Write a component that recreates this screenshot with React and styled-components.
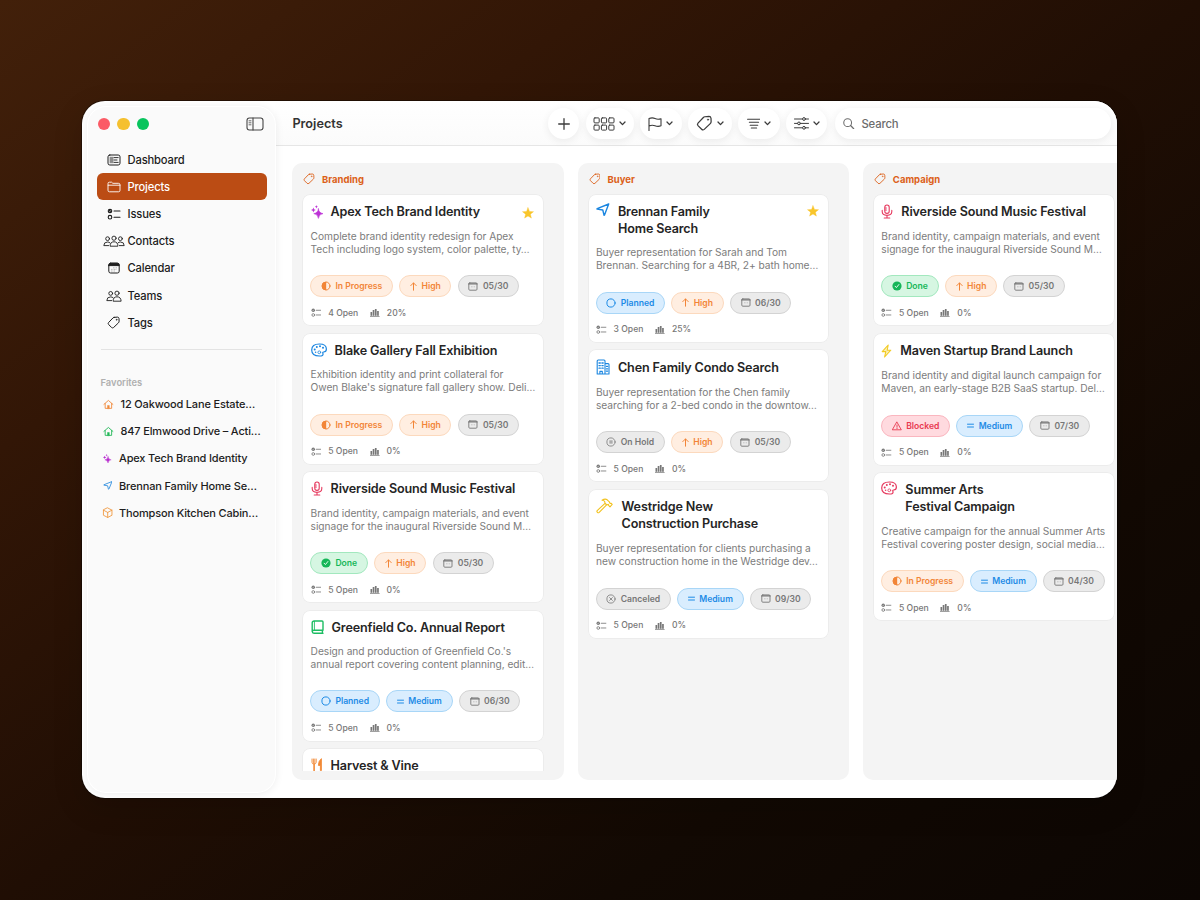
import React from "react";
import styled, { createGlobalStyle, css } from "styled-components";

const ICONS = {
  dashboard: {
    w: 14, h: 12, sw: 1,
    body: (
      <>
        <rect x="1" y="1" width="12" height="10" rx="1.8" />
        <rect x="2.6" y="2.8" width="3.8" height="6.4" fill="currentColor" stroke="none" opacity=".5" />
        <path d="M7 3.6h4.2M7 6h3M7 8.4h4.2" strokeWidth=".9" />
      </>
    ),
  },
  folder: {
    w: 14, h: 12, sw: 0.9,
    body: <path d="M1 4.2V2.6Q1 1.2 2.4 1.2H4.6L5.8 2.3H11.4Q13 2.3 13 3.8V9.3Q13 10.8 11.5 10.8H2.5Q1 10.8 1 9.3V4.2H13" />,
  },
  checklist: {
    w: 14, h: 12, sw: 1.1,
    body: (
      <>
        <circle cx="3" cy="3" r="2.3" fill="currentColor" stroke="none" />
        <circle cx="3" cy="9.2" r="1.8" />
        <path d="M7 3h6M7 9.2h6" />
        <path d="M2.2 3l.6.7 1-1.3" stroke="#fff" strokeWidth=".5" />
      </>
    ),
  },
  people3: {
    w: 22, h: 12, sw: 0.9,
    body: (
      <>
        <circle cx="11" cy="3.2" r="2.1" />
        <circle cx="4.6" cy="3.7" r="1.9" />
        <circle cx="17.4" cy="3.7" r="1.9" />
        <path d="M7.1 10.8Q7.1 6.8 11 6.8T14.9 10.8Z" />
        <path d="M5.6 10.6H.8Q.8 7 4.6 7Q6 7 6.9 7.8M16.4 10.6H21.2Q21.2 7 17.4 7Q16 7 15.1 7.8" />
      </>
    ),
  },
  calendar: {
    w: 12, h: 12, sw: 1,
    body: (
      <>
        <rect x=".8" y="1.2" width="10.4" height="9.8" rx="1.8" />
        <path d="M.8 3.2Q.8 1.2 2.8 1.2H9.2Q11.2 1.2 11.2 3.2V3.6H.8Z" fill="currentColor" />
        <path d="M5 5.8h4M3 7.4h6M3 9h4" strokeWidth=".8" strokeDasharray=".9 .6" strokeLinecap="butt" opacity=".4" />
      </>
    ),
  },
  people2: {
    w: 16, h: 12, sw: 0.9,
    body: (
      <>
        <circle cx="4.7" cy="3.4" r="1.9" />
        <circle cx="11" cy="3.2" r="2.1" />
        <path d="M7.1 10.8Q7.1 6.8 11 6.8T15.1 10.8Z" />
        <path d="M5.6 10.6H.8Q.8 6.9 4.7 6.9Q6 6.9 7 7.6" />
      </>
    ),
  },
  tag: {
    w: 13, h: 13, sw: 1,
    body: (
      <>
        <path d="M7 1.4L10.4 1.1Q11.8 1.1 12 2.6L12.1 5.2Q12.1 6.2 11.4 6.9L6.6 11.5Q5.5 12.4 4.5 11.4L1.6 8.5Q.7 7.5 1.6 6.5L5.9 2Q6.4 1.5 7 1.4Z" />
        <circle cx="9.6" cy="3.7" r=".55" fill="currentColor" strokeWidth=".4" />
      </>
    ),
  },
  panel: {
    w: 18, h: 14, sw: 1.1,
    body: (
      <>
        <rect x="1" y="1" width="16" height="12" rx="2.4" />
        <path d="M7 1v12" />
        <path d="M3 3.8h2M3 5.8h2M3 7.8h2" strokeWidth=".8" />
      </>
    ),
  },
  house: {
    w: 12, h: 12, sw: 1,
    body: (
      <>
        <path d="M1 6L6 1.6L11 6M2.4 5V10.4H9.6V5" />
        <path d="M5 10.4V7.2H7V10.4Z" fill="currentColor" strokeWidth=".5" />
      </>
    ),
  },
  sparkles: {
    w: 12, h: 14, sw: 0,
    body: (
      <g fill="currentColor">
        <path d="M7.4 3.8Q7.8 8.1 12 8.6Q7.8 9.1 7.4 13.4Q7 9.1 2.8 8.6Q7 8.1 7.4 3.8Z" stroke="currentColor" strokeWidth=".6" />
        <path d="M2.4 2.6Q2.6 4.7 4.8 5Q2.6 5.3 2.4 7.4Q2.2 5.3 0 5Q2.2 4.7 2.4 2.6Z" />
        <path d="M5.4 0Q5.5 1.6 7 1.8Q5.5 2 5.4 3.6Q5.3 2 3.8 1.8Q5.3 1.6 5.4 0Z" />
      </g>
    ),
  },
  plane: {
    w: 14, h: 13, sw: 1.4,
    body: <path d="M12.7 1L1.2 5.6Q.8 5.9 1.2 6.1L6.8 7L8 12.1Q8.2 12.5 8.5 12.1Z" />,
  },
  box: {
    w: 12, h: 12, sw: 0.9,
    body: <path d="M6 1L10.5 3.3V8.7L6 11L1.5 8.7V3.3ZM1.5 3.3L6 5.7L10.5 3.3M6 5.7V11" />,
  },
  palette: {
    w: 16, h: 14, sw: 1.2,
    body: (
      <>
        <path d="M8.4 1Q15.4 1 15.4 6Q15.4 9 12.6 9Q11.2 9.2 12 10.6Q12.6 13 8.4 13Q.7 13 .7 7T8.4 1Z" />
        <g fill="currentColor" stroke="none">
          <circle cx="3.7" cy="6.4" r="1" />
          <circle cx="5.8" cy="3.9" r="1" />
          <circle cx="9" cy="3.3" r="1" />
          <circle cx="12" cy="4.7" r="1" />
          <circle cx="4.6" cy="9.2" r=".8" />
        </g>
        <circle cx="8.3" cy="9.3" r="1.4" strokeWidth=".8" />
      </>
    ),
  },
  mic: {
    w: 12, h: 15, sw: 1.1,
    body: (
      <>
        <rect x="3.8" y="1" width="4.4" height="8.4" rx="2.2" />
        <path d="M1.2 6.4V7.6Q1.2 11.4 6 11.4T10.8 7.6V6.4M6 11.4V14M3.2 14H8.8M4 4h1.4M4 6h1.4" />
      </>
    ),
  },
  book: {
    w: 13, h: 14, sw: 1.4,
    body: (
      <>
        <path d="M3.2 1H11Q12 1 12 2V10.2H3Q1.2 10.2 1.2 11.6Q1.2 13.2 3 13.2H12M1.2 11.6V2.8Q1.2 1 3.2 1M11.4 10.2V13" />
        <path d="M3.4 1.4V10" strokeWidth=".9" />
      </>
    ),
  },
  fork: {
    w: 12, h: 14, sw: 0.9,
    body: (
      <>
        <path d="M1 1V4.4Q1 6 3 6T5.2 4.4V1M2.4 1V5M3.8 1V5" />
        <path d="M3.1 6V12.6" strokeWidth="1.6" />
        <path d="M10 1Q7.4 3 7.4 7.4H9.4V12.6H10.4V1Z" fill="currentColor" />
      </>
    ),
  },
  building: {
    w: 14, h: 16, sw: 1.1,
    body: (
      <>
        <path d="M1.2 15V2Q1.2 1 2.2 1H8Q9 1 9 2V15M9 4.6H12Q13 4.6 13 5.6V15H1.2M3.9 15V12.4H6.3V15" />
        <path d="M3 4h1.3M5.9 4h1.3M3 6.6h1.3M5.9 6.6h1.3M3 9.2h1.3M5.9 9.2h1.3M10.4 7.4h1.2M10.4 9.8h1.2M10.4 12.2h1.2" strokeWidth="1.3" />
      </>
    ),
  },
  hammer: {
    w: 17.6, h: 16, sw: 1.1,
    body: (
      <path d="M9 5.3L1.2 12.6Q.5 13.4 1.4 14.3T3.2 14.4L10.6 6.8M6 2.2Q9.2.2 11.2 1.8L13.6 4.2Q13.4 5.2 14.2 5.4L15 5.2L16.2 6.4L14 8.8L12.6 7.4Q12.8 6.6 12 6.4L10.8 7L8.8 5Q9.4 2.6 6 2.2Z" />
    ),
  },
  bolt: {
    w: 11, h: 14, sw: 1.1,
    body: <path d="M7.2 1L1.2 7.6H4.8L3.6 13L9.8 6.2H6.2Z" fill="#fbf0b8" />,
  },
  star: {
    w: 12, h: 12, sw: 0.4,
    body: <path fill="currentColor" d="M6 .7L7.5 4.4L11.5 4.7L8.4 7.2L9.4 11.1L6 9L2.6 11.1L3.6 7.2L.5 4.7L4.5 4.4Z" />,
  },
  plus: { w: 12, h: 12, sw: 1.3, body: <path d="M6 .7V11.3M.7 6H11.3" /> },
  grid: {
    w: 22, h: 14, sw: 1,
    body: (
      <>
        {[1, 8.4, 15.8].map((x) => (
          <React.Fragment key={x}>
            <rect x={x} y=".9" width="5.2" height="5" rx=".9" />
            <rect x={x} y="8.1" width="5.2" height="5" rx=".9" />
          </React.Fragment>
        ))}
      </>
    ),
  },
  flag: {
    w: 14, h: 14, sw: 1.1,
    body: <path d="M1 13.4V1.6Q4.2.2 7 1.5T13 1.7V8.8Q10 9.9 7 8.7T1 9.1" />,
  },
  sort: { w: 15, h: 12, sw: 1.1, body: <path d="M.6 1.4H14.4M2.5 4.6H12.5M3.4 7.8H11.6M4.6 10.8H10.4" /> },
  sliders: {
    w: 15, h: 13, sw: 1,
    body: (
      <>
        <path d="M.5 2H8.4M11.6 2H14.5M.5 6.4H3.4M6.6 6.4H14.5M.5 10.8H8.4M11.6 10.8H14.5" />
        <circle cx="10" cy="2" r="1.4" />
        <circle cx="5" cy="6.4" r="1.4" />
        <circle cx="10" cy="10.8" r="1.4" />
      </>
    ),
  },
  chevron: { w: 7, h: 5, sw: 1.3, body: <path d="M1 1L3.5 3.6L6 1" /> },
  search: {
    w: 12, h: 12, sw: 1.1,
    body: (
      <>
        <circle cx="4.9" cy="4.9" r="4.1" />
        <path d="M8 8L11.2 11.2" strokeWidth="1.4" />
      </>
    ),
  },
  half: {
    w: 10, h: 10, sw: 1,
    body: (
      <>
        <circle cx="5" cy="5" r="4" />
        <path d="M5 1A4 4 0 0 0 5 9Z" fill="currentColor" strokeWidth=".2" />
      </>
    ),
  },
  circle: { w: 10, h: 10, sw: 1, body: <circle cx="5" cy="5" r="4.1" /> },
  check: {
    w: 10, h: 10, sw: 0,
    body: (
      <>
        <circle cx="5" cy="5" r="4.6" fill="currentColor" />
        <path d="M3.1 5.2L4.4 6.6L6.9 3.5" stroke="#e6faee" strokeWidth="1" />
      </>
    ),
  },
  pause: {
    w: 10, h: 10, sw: 0.8,
    body: (
      <>
        <circle cx="5" cy="5" r="4.1" />
        <path d="M4.1 3.7V6.3M5.9 3.7V6.3" strokeWidth=".9" />
      </>
    ),
  },
  cross: {
    w: 10, h: 10, sw: 0.8,
    body: (
      <>
        <circle cx="5" cy="5" r="4.1" />
        <path d="M3.6 3.6L6.4 6.4M6.4 3.6L3.6 6.4" />
      </>
    ),
  },
  warning: { w: 10, h: 10, sw: 0.9, body: <path d="M5 1.2L9.3 8.8H.7ZM5 4V6.2M5 7.3V7.6" /> },
  arrow: { w: 7, h: 9, sw: 1, body: <path d="M3.5 8.2V1M.8 3.6L3.5.9L6.2 3.6" /> },
  equals: { w: 7, h: 9, sw: 1, body: <path d="M.5 3.2H6.5M.5 6H6.5" /> },
  date: {
    w: 10, h: 9, sw: 0.9,
    body: (
      <>
        <rect x=".8" y=".9" width="8.2" height="7.3" rx="1" />
        <path d="M.8 1.9H9" strokeWidth="1.3" />
        <path d="M3 4.8H6.8" strokeWidth=".7" strokeDasharray=".8 .7" strokeLinecap="butt" opacity=".6" />
      </>
    ),
  },
  bars: {
    w: 10, h: 9, sw: 0,
    body: (
      <g fill="currentColor">
        <rect x=".5" y="4" width="1.7" height="3.8" />
        <rect x="2.7" y="2" width="1.7" height="5.8" />
        <rect x="4.9" y="1" width="1.7" height="6.8" />
        <rect x="7.1" y="3" width="1.7" height="4.8" />
        <rect x="0" y="8" width="9.6" height=".7" />
      </g>
    ),
  },
};

function Icon({ name, scale = 1 }) {
  const { w, h, sw, body } = ICONS[name];
  return (
    <Svg
      width={w * scale}
      height={h * scale}
      viewBox={`0 0 ${w} ${h}`}
      fill="none"
      stroke="currentColor"
      strokeWidth={sw}
      strokeLinecap="round"
      strokeLinejoin="round"
    >
      {body}
    </Svg>
  );
}

const NAV = [
  ["dashboard", "Dashboard"],
  ["folder", "Projects"],
  ["checklist", "Issues"],
  ["people3", "Contacts"],
  ["calendar", "Calendar"],
  ["people2", "Teams"],
  ["tag", "Tags"],
];

const FAVORITES = [
  ["house", "#f08a3c", "12 Oakwood Lane Estate…", 13.5],
  ["house", "#22b858", "847 Elmwood Drive – Acti…", 13.5],
  ["sparkles", "#b92fd0", "Apex Tech Brand Identity", 12],
  ["plane", "#3d96e0", "Brennan Family Home Se…", 12],
  ["box", "#f0953a", "Thompson Kitchen Cabin…", 12],
];

const TOOLS = [
  ["plus", 31],
  ["grid", 48],
  ["flag", 42],
  ["tag", 43.6, 1.25],
  ["sort", 41.6, 0.93],
  ["sliders", 41],
];

const STATUS = {
  "In Progress": ["half", "orange"],
  Planned: ["circle", "blue"],
  Done: ["check", "green"],
  "On Hold": ["pause", "gray"],
  Canceled: ["cross", "gray"],
  Blocked: ["warning", "red"],
};

const PRIORITY = {
  High: ["arrow", "orange"],
  Medium: ["equals", "blue"],
};

const TONES = {
  orange: ["#f28537", "#ffeee1", "#fcd9bd"],
  blue: ["#1d8be6", "#d9edfe", "#a8d6f7"],
  green: ["#15b658", "#d6f6e2", "#a2e8be"],
  gray: ["#777777", "#ebebeb", "#d3d3d3"],
  red: ["#e8394f", "#ffdadf", "#fab6bf"],
};

const riverside = {
  icon: "mic", color: "#e63a5f", title: ["Riverside Sound Music Festival"],
  text: ["Brand identity, campaign materials, and event", "signage for the inaugural Riverside Sound M…"],
  status: "Done", priority: "High", date: "05/30", open: 5, done: 0,
};

const COLUMNS = [
  {
    name: "Branding",
    cards: [
      {
        icon: "sparkles", color: "#bd33d6", title: ["Apex Tech Brand Identity"], starred: true,
        text: ["Complete brand identity redesign for Apex", "Tech including logo system, color palette, ty…"],
        status: "In Progress", priority: "High", date: "05/30", open: 4, done: 20,
      },
      {
        icon: "palette", color: "#1b86e0", title: ["Blake Gallery Fall Exhibition"],
        text: ["Exhibition identity and print collateral for", "Owen Blake's signature fall gallery show. Deli…"],
        status: "In Progress", priority: "High", date: "05/30", open: 5, done: 0,
      },
      riverside,
      {
        icon: "book", color: "#1dbd63", title: ["Greenfield Co. Annual Report"],
        text: ["Design and production of Greenfield Co.'s", "annual report covering content planning, edit…"],
        status: "Planned", priority: "Medium", date: "06/30", open: 5, done: 0,
      },
      { icon: "fork", color: "#f28a37", title: ["Harvest & Vine"] },
    ],
  },
  {
    name: "Buyer",
    cards: [
      {
        icon: "plane", color: "#1b86e0", title: ["Brennan Family", "Home Search"], head: 50.5, starred: true,
        text: ["Buyer representation for Sarah and Tom", "Brennan. Searching for a 4BR, 2+ bath home…"],
        status: "Planned", priority: "High", date: "06/30", open: 3, done: 25,
      },
      {
        icon: "building", color: "#1b86e0", title: ["Chen Family Condo Search"], head: 35,
        text: ["Buyer representation for the Chen family", "searching for a 2-bed condo in the downtow…"],
        status: "On Hold", priority: "High", date: "05/30", open: 5, done: 0,
      },
      {
        icon: "hammer", color: "#f2c21f", title: ["Westridge New", "Construction Purchase"], head: 52.3,
        text: ["Buyer representation for clients purchasing a", "new construction home in the Westridge dev…"],
        status: "Canceled", priority: "Medium", date: "09/30", open: 5, done: 0,
      },
    ],
  },
  {
    name: "Campaign",
    cards: [
      riverside,
      {
        icon: "bolt", color: "#f2cb26", title: ["Maven Startup Brand Launch"], head: 35,
        text: ["Brand identity and digital launch campaign for", "Maven, an early-stage B2B SaaS startup. Del…"],
        status: "Blocked", priority: "Medium", date: "07/30", open: 5, done: 0,
      },
      {
        icon: "palette", color: "#e63a5f", title: ["Summer Arts", "Festival Campaign"], head: 51,
        text: ["Creative campaign for the annual Summer Arts", "Festival covering poster design, social media…"],
        status: "In Progress", priority: "Medium", date: "04/30", open: 5, done: 0,
      },
    ],
  },
];

function CardDetails({ card }) {
  const [statusIcon, statusTone] = STATUS[card.status];
  const [priorityIcon, priorityTone] = PRIORITY[card.priority];
  return (
    <>
      <Description>
        {card.text.map((line) => (
          <Line key={line}>{line}</Line>
        ))}
      </Description>
      <Chips>
        <Chip $tone={statusTone}>
          <Icon name={statusIcon} />
          {card.status}
        </Chip>
        <Chip $tone={priorityTone}>
          <Icon name={priorityIcon} />
          {card.priority}
        </Chip>
        <Chip $tone="gray">
          <Icon name="date" />
          {card.date}
        </Chip>
      </Chips>
      <Stats>
        <Icon name="checklist" scale={0.76} />
        <Stat>{card.open} Open</Stat>
        <Icon name="bars" />
        <Stat>{card.done}%</Stat>
      </Stats>
    </>
  );
}

function Card({ card }) {
  return (
    <CardBox>
      <CardHead $height={card.head || 34} $tall={card.title.length > 1}>
        <CardIcon $color={card.color}>
          <Icon name={card.icon} />
        </CardIcon>
        <CardTitle>
          {card.title.map((line) => (
            <Line key={line}>{line}</Line>
          ))}
        </CardTitle>
        {card.starred && (
          <Star>
            <Icon name="star" />
          </Star>
        )}
      </CardHead>
      {card.text && <CardDetails card={card} />}
    </CardBox>
  );
}

function App() {
  return (
    <Desktop>
      <GlobalStyle />
      <Window>
        <Sidebar>
          <TitleBar>
            <Light $color="#fb5b66" />
            <Light $color="#f5c02f" />
            <Light $color="#08c45d" />
            <PanelToggle>
              <Icon name="panel" />
            </PanelToggle>
          </TitleBar>
          <Nav>
            {NAV.map(([icon, label]) => (
              <NavItem key={label} $active={label === "Projects"}>
                <NavIcon>
                  <Icon name={icon} />
                </NavIcon>
                {label}
              </NavItem>
            ))}
          </Nav>
          <Divider />
          <FavoritesTitle>Favorites</FavoritesTitle>
          {FAVORITES.map(([icon, color, label, width]) => (
            <Favorite key={label}>
              <FavoriteIcon $color={color} $width={width}>
                <Icon name={icon} scale={icon === "house" ? 0.9 : icon === "box" ? 0.95 : 0.68} />
              </FavoriteIcon>
              {label}
            </Favorite>
          ))}
        </Sidebar>
        <Main>
          <Toolbar>
            <PageTitle>Projects</PageTitle>
            <Tools>
              {TOOLS.map(([icon, width, scale]) => (
                <ToolButton key={icon} $width={width}>
                  <Icon name={icon} scale={scale} />
                  {icon !== "plus" && <Icon name="chevron" />}
                </ToolButton>
              ))}
            </Tools>
            <SearchField>
              <Icon name="search" scale={0.95} />
              Search
            </SearchField>
          </Toolbar>
          <Board>
            {COLUMNS.map((column) => (
              <Column key={column.name}>
                <ColumnHead>
                  <Icon name="tag" scale={0.9} />
                  {column.name}
                </ColumnHead>
                <CardList>
                  {column.cards.map((card) => (
                    <Card key={card.title[0]} card={card} />
                  ))}
                </CardList>
              </Column>
            ))}
          </Board>
        </Main>
      </Window>
    </Desktop>
  );
}

const GlobalStyle = createGlobalStyle`
  * {
    box-sizing: border-box;
  }
  body {
    margin: 0;
    font-family: Inter, "Liberation Sans", sans-serif;
    color: #222222;
  }
`;

const Svg = styled.svg`
  display: block;
  flex: none;
`;

const Desktop = styled.div`
  width: 1200px;
  height: 900px;
  padding: 101px 83px 103px 82px;
  background: linear-gradient(to bottom right, #42200a 0%, #321606 25%, #200e04 50%, #120903 75%, #0c0603 100%);
  overflow: hidden;
`;

const Window = styled.div`
  display: flex;
  width: 1035px;
  height: 696.5px;
  padding: 6px 0 6px 6px;
  border-radius: 23px;
  background: #ffffff;
  overflow: hidden;
  box-shadow: 0 0 0 1px rgba(0, 0, 0, 0.35), 0 10px 30px rgba(0, 0, 0, 0.15);
`;

const Sidebar = styled.aside`
  display: flex;
  flex-direction: column;
  flex: none;
  width: 186.6px;
  padding: 0 7.6px 0 9px;
  border-radius: 18px;
  background: #fafafa;
  box-shadow: 0 0 0 1px #ffffff, 0 1px 10px rgba(0, 0, 0, 0.09);
  z-index: 1;
`;

const TitleBar = styled.div`
  display: flex;
  align-items: center;
  gap: 7.2px;
  height: 34px;
  padding-left: 0.6px;
  margin-bottom: 5px;
`;

const Light = styled.span`
  width: 12.4px;
  height: 12.4px;
  border-radius: 50%;
  background: ${(p) => p.$color};
`;

const PanelToggle = styled.span`
  margin-left: auto;
  margin-right: 3px;
  color: #444444;
`;

const Nav = styled.nav`
  display: flex;
  flex-direction: column;
`;

const NavItem = styled.div`
  display: flex;
  align-items: center;
  height: 27.2px;
  border-radius: 6px;
  font-size: 11.2px;
  font-weight: 500;
  letter-spacing: -0.15px;
  color: #1d1d1d;
  ${(p) =>
    p.$active &&
    css`
      background: #bb4c14;
      color: #ffffff;
    `}
`;

const NavIcon = styled.span`
  display: flex;
  justify-content: center;
  width: 22px;
  margin: 0 3px 0 5.5px;
`;

const Divider = styled.div`
  height: 1px;
  margin: 13px 5px 0 4px;
  background: #e3e3e3;
`;

const FavoritesTitle = styled.div`
  margin: 26px 0 0.4px 3.5px;
  height: 14px;
  line-height: 14px;
  font-size: 9.4px;
  font-weight: 600;
  color: #b0b0b0;
`;

const Favorite = styled.div`
  display: flex;
  align-items: center;
  height: 27.1px;
  padding-left: 4.5px;
  font-size: 11px;
  font-weight: 500;
  letter-spacing: -0.16px;
  color: #1d1d1d;
  white-space: nowrap;
`;

const FavoriteIcon = styled.span`
  display: flex;
  flex: none;
  justify-content: center;
  width: ${(p) => p.$width}px;
  margin-right: 5.5px;
  color: ${(p) => p.$color};
`;

const Main = styled.main`
  display: flex;
  flex-direction: column;
  flex: 1;
  min-width: 0;
  margin-top: -6px;
`;

const Toolbar = styled.header`
  display: flex;
  align-items: center;
  flex: none;
  height: 45px;
  padding: 1px 6px 0 17.8px;
  border-bottom: 1px solid #e6e6e6;
  background: linear-gradient(#ffffff, #fbfbfb);
`;

const PageTitle = styled.h1`
  width: 256px;
  margin: 0;
  font-size: 12.7px;
  font-weight: 600;
  color: #333333;
`;

const Tools = styled.div`
  display: flex;
  gap: 6.3px;
  margin-right: 7.8px;
`;

const pill = css`
  display: flex;
  align-items: center;
  height: 31px;
  border-radius: 16px;
  background: #ffffff;
  box-shadow: 0 2px 9px rgba(0, 0, 0, 0.07);
`;

const ToolButton = styled.div`
  ${pill}
  justify-content: center;
  gap: 4px;
  width: ${(p) => p.$width}px;
  color: #3c3c3c;
`;

const SearchField = styled.div`
  ${pill}
  flex: 1;
  gap: 6.6px;
  padding-left: 8.6px;
  font-size: 11.3px;
  font-weight: 500;
  letter-spacing: -0.16px;
  color: #6c6c6c;
`;

const Board = styled.div`
  display: flex;
  flex: 1;
  gap: 14px;
  padding: 17px 0 11px 17.8px;
  overflow: hidden;
`;

const Column = styled.section`
  display: flex;
  flex-direction: column;
  flex: none;
  width: 271.4px;
  height: 617px;
  padding-bottom: 9px;
  border-radius: 10px;
  background: #f4f4f4;
`;

const ColumnHead = styled.div`
  display: flex;
  align-items: center;
  gap: 7px;
  flex: none;
  height: 31.4px;
  padding: 1px 0 0 11px;
  font-size: 9.5px;
  font-weight: 700;
  color: #dc6018;
`;

const CardList = styled.div`
  display: flex;
  flex-direction: column;
  flex: 1;
  gap: 6.4px;
  padding: 0 20px 0 10px;
  overflow: hidden;
`;

const CardBox = styled.article`
  flex: none;
  min-height: 132px;
  padding: 0 8px 7.6px 8.2px;
  border-radius: 8px;
  background: #ffffff;
  box-shadow: inset 0 0 0 1px #ececec;
`;

const CardHead = styled.div`
  display: flex;
  align-items: ${(p) => (p.$tall ? "flex-start" : "center")};
  gap: 8px;
  height: ${(p) => p.$height}px;
  padding-top: ${(p) => (p.$tall ? p.$height / 2 - 17 : 1)}px;
  margin-bottom: 1.5px;
`;

const CardIcon = styled.span`
  color: ${(p) => p.$color};
`;

const CardTitle = styled.h2`
  margin: 0;
  font-size: 12.6px;
  line-height: 17px;
  font-weight: 600;
  letter-spacing: -0.15px;
  color: #252525;
`;

const Line = styled.span`
  display: block;
  white-space: nowrap;
`;

const Star = styled.span`
  margin: 2px 2px 0 auto;
  color: #f9c62b;
`;

const Description = styled.p`
  margin: 0 0 19.4px;
  font-size: 10.2px;
  line-height: 13px;
  letter-spacing: -0.03px;
  color: #7c7c7c;
`;

const Chips = styled.div`
  display: flex;
  gap: 6.3px;
  margin-left: -0.4px;
`;

const Chip = styled.span`
  display: flex;
  align-items: center;
  gap: 4.5px;
  height: 22px;
  padding: 0 9.7px;
  border: 1px solid ${(p) => TONES[p.$tone][2]};
  border-radius: 11px;
  background: ${(p) => TONES[p.$tone][1]};
  font-size: 8.6px;
  font-weight: 600;
  color: ${(p) => TONES[p.$tone][0]};
  white-space: nowrap;
`;

const Stats = styled.div`
  display: flex;
  align-items: center;
  gap: 7px;
  height: 12px;
  margin-top: 9.5px;
  font-size: 8.6px;
  font-weight: 500;
  color: #777777;
`;

const Stat = styled.span`
  margin-right: 4.6px;
`;

export default App;
